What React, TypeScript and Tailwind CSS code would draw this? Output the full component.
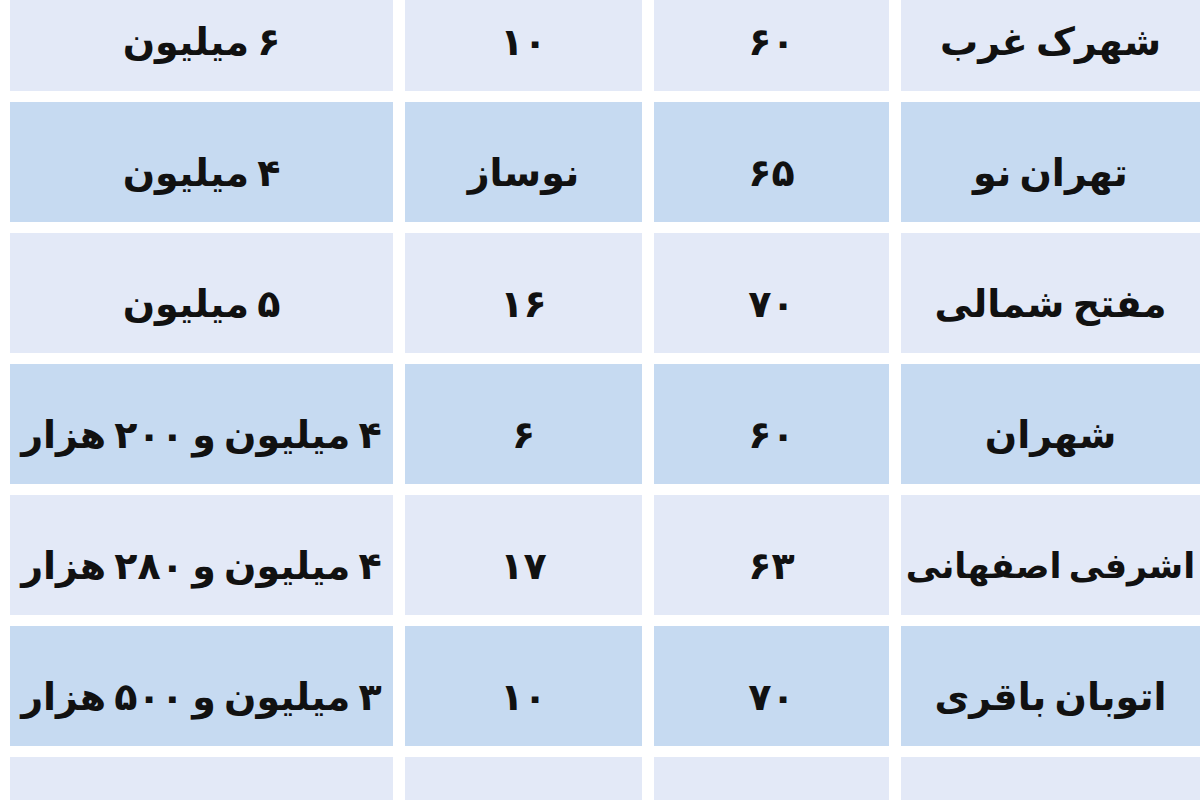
const rows: string[][] = [
  ['۶ میلیون', '۱۰', '۶۰', 'شهرک غرب'],
  ['۴ میلیون', 'نوساز', '۶۵', 'تهران نو'],
  ['۵ میلیون', '۱۶', '۷۰', 'مفتح شمالی'],
  ['۴ میلیون و ۲۰۰ هزار', '۶', '۶۰', 'شهران'],
  ['۴ میلیون و ۲۸۰ هزار', '۱۷', '۶۳', 'اشرفی اصفهانی'],
  ['۳ میلیون و ۵۰۰ هزار', '۱۰', '۷۰', 'اتوبان باقری'],
  ['', '', '', ''],
];

const widths = ['w-[383px]', 'w-[237px]', 'w-[235px]', 'w-[299px]'];

const App = () => {
  return (
    <div
      className="h-[800px] w-[1200px] overflow-hidden bg-white"
      style={{ fontFamily: '"DejaVu Sans", "Noto Sans", sans-serif' }}
    >
      <div className="-mt-[29px] flex flex-col gap-[11px] pl-[10px]">
        {rows.map((row, i) => (
          <div key={i} className="flex gap-[12px]">
            {row.map((cell, j) => (
              <div
                key={j}
                dir="rtl"
                className={`${widths[j]} h-[120px] shrink-0 flex items-center justify-center pt-[22px] whitespace-nowrap overflow-hidden font-bold tracking-[-0.5px] [word-spacing:-5px] text-[#111] ${
                  cell.length > 12 && j === 3 ? 'text-[35px]' : 'text-[38px]'
                } ${i % 2 === 0 ? 'bg-[#e3e9f7]' : 'bg-[#c6daf1]'}`}
              >
                {cell}
              </div>
            ))}
          </div>
        ))}
      </div>
    </div>
  );
};

export default App;
